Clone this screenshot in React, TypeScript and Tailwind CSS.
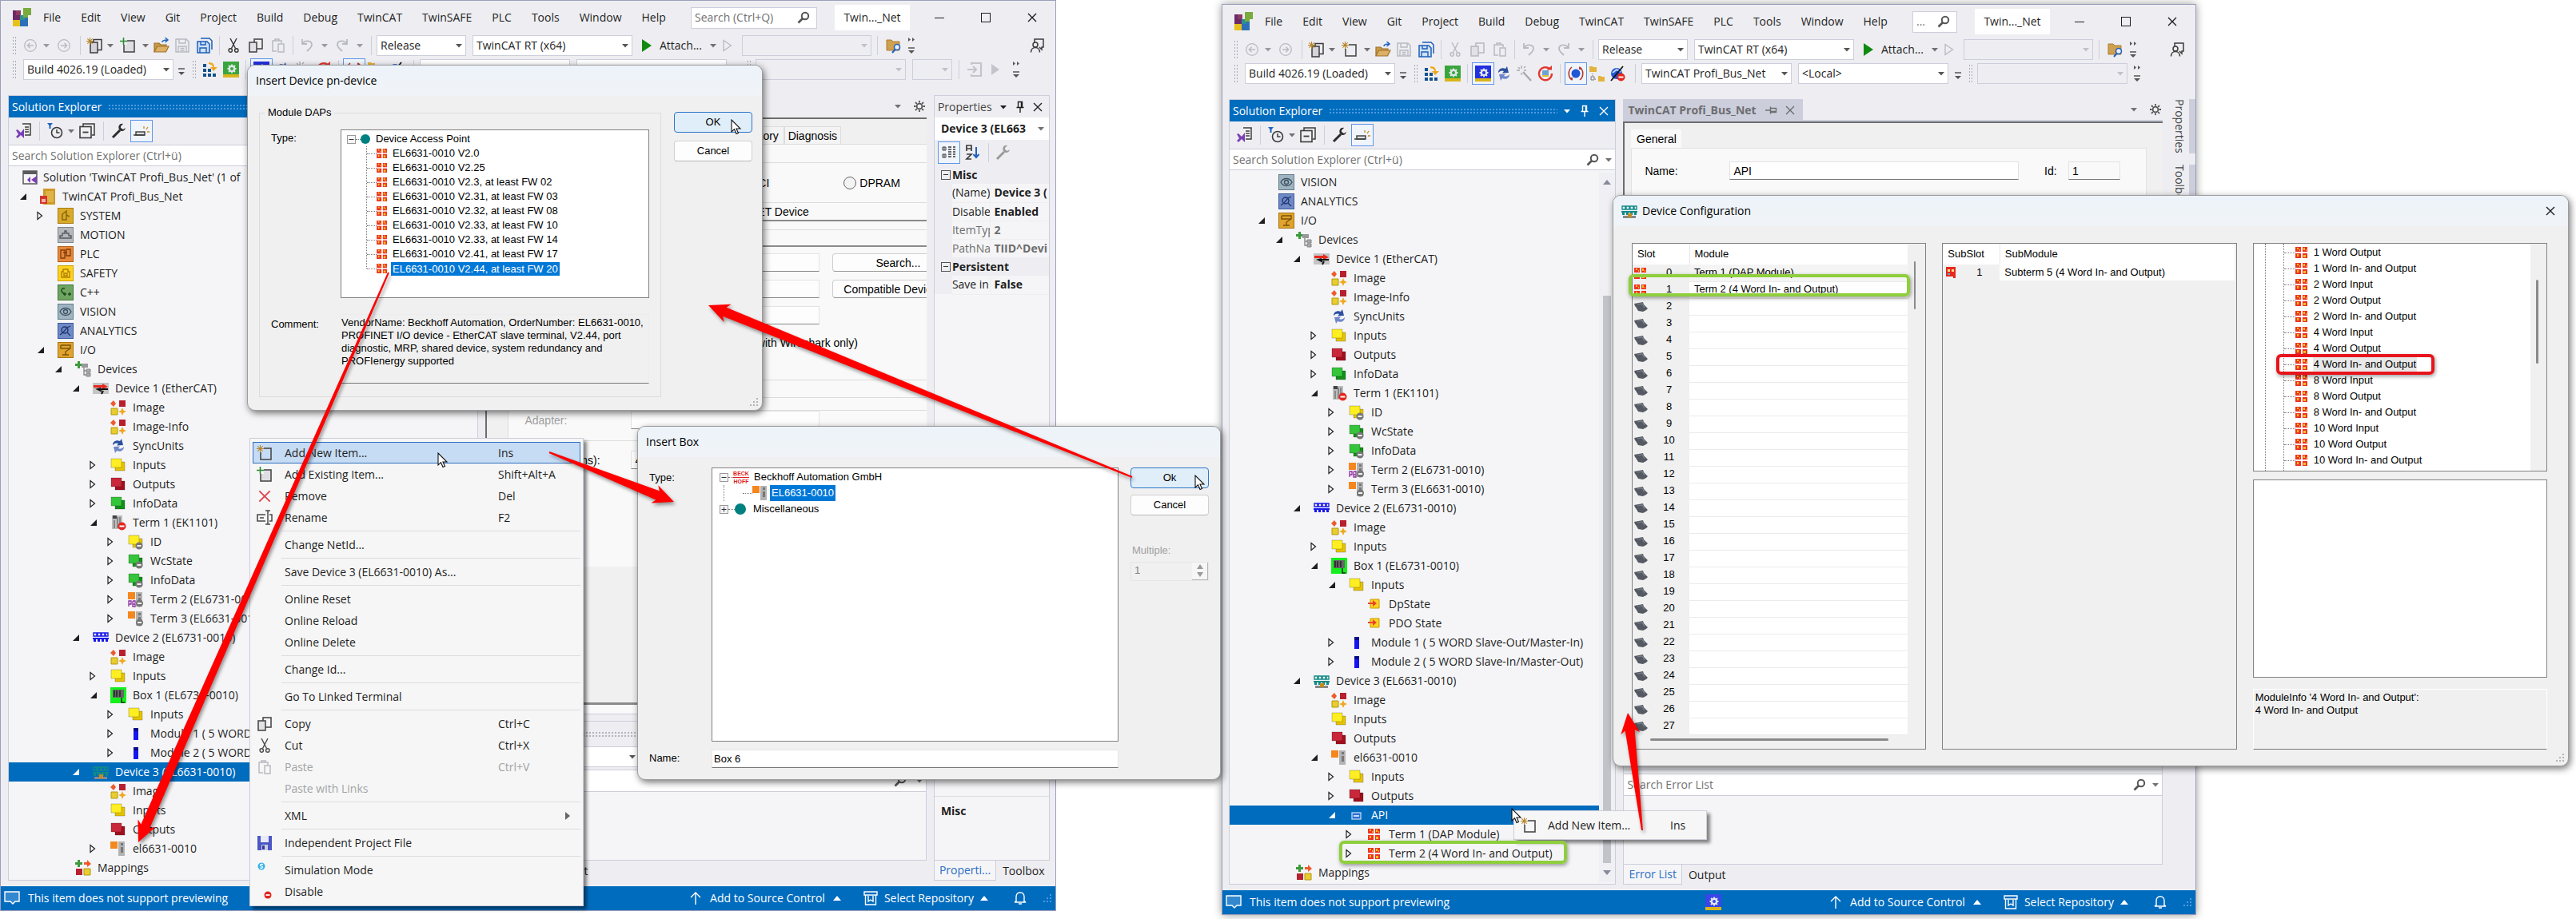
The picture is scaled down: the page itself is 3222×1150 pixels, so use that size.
import React from "react";

/* ------------------------------------------------------------------ */
/* Small glyphs                                                         */
/* ------------------------------------------------------------------ */

const Svg = ({ children, className = "h-5 w-5", box = "0 0 20 20" }: { children: React.ReactNode; className?: string; box?: string }) => (
  <svg viewBox={box} className={"shrink-0 " + className} fill="none" aria-hidden="true">
    {children}
  </svg>
);

const Down = ({ c = "#717171" }: { c?: string }) => (
  <Svg className="h-2 w-2" box="0 0 8 8">
    <path d="M0 2h8L4 6.500z" fill={c} />
  </Svg>
);
const Overflow = () => (
  <Svg className="h-4 w-2.5" box="0 0 10 16">
    <path d="M1 7h8" stroke="#555" strokeWidth="1.500" />
    <path d="M1 11h8l-4 4z" fill="#555" />
  </Svg>
);
const OverflowMore = () => (
  <Svg className="h-6 w-2.5" box="0 0 10 24">
    <path d="M1 2l3 2.500L1 7zM6 2l3 2.500L6 7z" fill="#555" />
    <path d="M1 15h8" stroke="#555" strokeWidth="1.500" />
    <path d="M1 18h8l-4 4z" fill="#555" />
  </Svg>
);
const Grip = () => (
  <div className="h-6 w-1.5 bg-[radial-gradient(#a9a9b8_1px,transparent_1px)] bg-[length:3px_4px]" />
);
const Sep = () => <div className="h-6 w-px bg-[#cccedb]" />;
const Magnifier = () => (
  <Svg className="h-4 w-4" box="0 0 16 16">
    <circle cx="10" cy="6" r="4.200" stroke="#555" strokeWidth="2" />
    <path d="M7 9l-5.500 5.500" stroke="#555" strokeWidth="2.600" />
  </Svg>
);
const Pin = ({ c = "#1e1e1e" }: { c?: string }) => (
  <Svg className="h-4 w-3" box="0 0 12 16">
    <path d="M3.500 1.500h5v7h-5zM7.500 1.500v7M1.500 8.500h9M6 8.500V15" stroke={c} strokeWidth="1.400" />
  </Svg>
);
const Cross = ({ c = "#1e1e1e", className = "h-3 w-3" }: { c?: string; className?: string }) => (
  <Svg className={className} box="0 0 12 12">
    <path d="M1 1l10 10M11 1L1 11" stroke={c} strokeWidth="1.400" />
  </Svg>
);
const Gear = () => (
  <Svg className="h-3.5 w-3.5" box="0 0 14 14">
    <circle cx="7" cy="7" r="3.400" stroke="#555" strokeWidth="1.800" />
    <path d="M7 0v2.500M7 11.500V14M0 7h2.500M11.500 7H14M2 2l1.800 1.800M10.200 10.200L12 12M12 2l-1.800 1.800M3.800 10.200L2 12" stroke="#555" strokeWidth="1.800" />
  </Svg>
);
const Cursor = ({ className }: { className: string }) => (
  <Svg className={"h-5 w-3.5 " + className} box="0 0 14 20">
    <path d="M1 1v15l3.500-3.300L7 18.500l2.500-1L7 12h5z" fill="#fff" stroke="#111" strokeWidth="1.100" />
  </Svg>
);
const SizeGrip = ({ c = "#b4b4b4" }: { c?: string }) => (
  <Svg className="h-3 w-3" box="0 0 12 12">
    <path d="M9 1h2v2H9zM5 5h2v2H5zM9 5h2v2H9zM1 9h2v2H1zM5 9h2v2H5zM9 9h2v2H9z" fill={c} />
  </Svg>
);

/* toolbar glyphs */
const Nav = ({ flip = false }) => (
  <Svg className={flip ? "h-4 w-4 rotate-180" : "h-4 w-4"} box="0 0 16 16">
    <circle cx="8" cy="8" r="7.300" stroke="#b9b9c2" strokeWidth="1.300" />
    <path d="M12 8H4.500M7.500 4.800L4.300 8l3.200 3.200" stroke="#b9b9c2" strokeWidth="1.400" />
  </Svg>
);
const Spark = () => <path d="M4.500 0v9M0 4.500h9M1.300 1.300l6.400 6.400M7.700 1.300L1.300 7.700" stroke="#b8862b" strokeWidth="1.100" />;
const NewProject = () => (
  <Svg>
    <rect x="9" y="2.500" width="10" height="13" fill="#eeeef2" stroke="#3c3c3c" strokeWidth="1.500" />
    <rect x="5" y="6" width="9" height="13" fill="#d4d4da" stroke="#3c3c3c" strokeWidth="1.500" />
    <Spark />
  </Svg>
);
const NewItem = ({ bg = "#eeeef2" }: { bg?: string }) => (
  <Svg>
    <rect x="5" y="4" width="13" height="14" fill={bg} stroke="#4a4a4a" strokeWidth="1.600" />
    <path d="M0 0h9v9H0z" fill={bg} />
    <Spark />
  </Svg>
);
const AddItem = ({ bg = "#eeeef2" }: { bg?: string }) => (
  <Svg>
    <rect x="5" y="4" width="13" height="14" fill="#dedee3" stroke="#4a4a4a" strokeWidth="1.600" />
    <path d="M0 0h9v9H0z" fill={bg} />
    <path d="M4.500 0v9M0 4.500h9" stroke="#2c8a33" strokeWidth="1.600" />
  </Svg>
);
const OpenFolder = () => (
  <Svg>
    <path d="M1 18V7h6l2 2h7v3" fill="#c79a4d" stroke="#a0722a" strokeWidth="1.200" />
    <path d="M1 18l3.500-7H19l-3.500 7z" fill="#dcb067" stroke="#a0722a" strokeWidth="1.200" />
    <path d="M11 6c0-2 2-3 6-3M14.500 0L18 3l-3.500 3" stroke="#1f62c0" strokeWidth="1.500" />
  </Svg>
);
const Floppy = ({ c }: { c: string }) => (
  <Svg className="h-[18px] w-[18px]" box="0 0 18 18">
    <path d="M1 1h13l3 3v13H1z" stroke={c} strokeWidth="1.500" />
    <path d="M5 1v5h8V1M4 17v-7h10v7M6.500 12.500h5M6.500 15h5" stroke={c} strokeWidth="1.400" />
  </Svg>
);
const FloppyAll = () => (
  <Svg>
    <path d="M5 1h11l3 3v11" stroke="#1c5fb8" strokeWidth="1.500" />
    <path d="M1 5h12l3 3v11H1z" fill="#cfe0f6" stroke="#1c5fb8" strokeWidth="1.500" />
    <path d="M5 5v4h6V5M4 19v-6h8v6" stroke="#1c5fb8" strokeWidth="1.400" />
  </Svg>
);
const Scissors = ({ c = "#333" }) => (
  <Svg className="h-[18px] w-3.5" box="0 0 14 18">
    <path d="M3 0l6.500 12.500M11 0L4.500 12.500" stroke={c} strokeWidth="1.400" />
    <circle cx="3.200" cy="15" r="2.200" stroke={c} strokeWidth="1.400" />
    <circle cx="10.800" cy="15" r="2.200" stroke={c} strokeWidth="1.400" />
  </Svg>
);
const Copy = ({ c = "#4a4a4a" }) => (
  <Svg className="h-[18px] w-[18px]" box="0 0 18 18">
    <rect x="7" y="1" width="10" height="12" stroke={c} strokeWidth="1.600" />
    <rect x="1" y="5" width="9" height="12" fill="#e2e2e6" stroke={c} strokeWidth="1.600" />
  </Svg>
);
const Paste = ({ c = "#b9b9c2" }) => (
  <Svg className="h-[18px] w-4" box="0 0 16 18">
    <path d="M6 16H1V3h11v3" stroke={c} strokeWidth="1.500" />
    <path d="M4 3V1h5v2" stroke={c} strokeWidth="1.500" />
    <rect x="8" y="7" width="7" height="10" stroke={c} strokeWidth="1.500" />
  </Svg>
);
const Undo = ({ flip = false }) => (
  <Svg className={flip ? "h-4 w-4 -scale-x-100" : "h-4 w-4"} box="0 0 16 16">
    <path d="M2 0v6h6M2 6c3-5 12-5 12 1 0 3-3 5-6 8" stroke="#b9b9c2" strokeWidth="1.800" />
  </Svg>
);
const Play = () => (
  <Svg className="h-4 w-3" box="0 0 12 16">
    <path d="M0 0l12 8L0 16z" fill="#118a11" />
  </Svg>
);
const PlayGhost = () => (
  <Svg className="h-4 w-3" box="0 0 12 16">
    <path d="M1 1.500l9.500 6.500L1 14.500z" stroke="#b9b9c2" strokeWidth="1.300" />
  </Svg>
);
const FolderSearch = () => (
  <Svg>
    <path d="M1 16V3h6l2 2h8v11z" fill="#cfa050" stroke="#ad7d30" />
    <circle cx="14" cy="12" r="3.500" fill="#eef" stroke="#1f62c0" strokeWidth="1.600" />
    <path d="M11.500 15L8 19" stroke="#1f62c0" strokeWidth="2" />
  </Svg>
);
const Feedback = () => (
  <Svg className="h-[18px] w-[18px]" box="0 0 18 18">
    <path d="M6 5V1h11v10h-2v3l-3-3" stroke="#3c3c3c" strokeWidth="1.500" />
    <circle cx="7" cy="8" r="3" stroke="#3c3c3c" strokeWidth="1.500" />
    <path d="M1.500 17.500c0-8 11-8 11 0" stroke="#3c3c3c" strokeWidth="1.500" />
  </Svg>
);
const Steps = () => (
  <Svg>
    <path d="M1 3h4v4H1zM1 9h4v4H1zM1 15h4v4H1zM7 9h4v4H7zM7 15h4v4H7zM13 15h4v4h-4z" fill="#14518c" />
    <path d="M8 1c6 0 7 3 7 6h4l-5 5-4-5h3c0-2-1-3-5-4z" fill="#f0a81e" />
  </Svg>
);
const GearTile = ({ a, b = "#d9b51c" }: { a: string; b?: string }) => (
  <Svg>
    <path d="M0 0h20v20H0z" fill={a} />
    <path d="M0 16h20v4H0z" fill={b} />
    <circle cx="11" cy="9" r="3.200" stroke="#dfe6ea" strokeWidth="2.400" />
    <path d="M11 3.500v2M11 12.500v2M5.500 9h2M14.500 9h2M7 5l1.500 1.500M13.500 11.500L15 13M15 5l-1.500 1.500M8.500 11.500L7 13" stroke="#dfe6ea" strokeWidth="1.800" />
  </Svg>
);
const Refresh = () => (
  <Svg>
    <path d="M3 9c0-5 5-7 9-5l2-3 2 8-8 .5 2-2.500C8 6 6 6 3 9z" fill="#2d4fa0" />
    <path d="M17 11c0 5-5 7-9 5l-2 3-2-8 8-.5-2 2.500c2 1 4 1 7-2z" fill="#6f86c9" />
  </Svg>
);
const Wand = () => (
  <Svg>
    <path d="M8 8l10 11" stroke="#a9a9ae" strokeWidth="2.400" />
    <path d="M6 0v4M6 9v3M0 6h4M9 3l2-2M2 2l2 2M9 6h3" stroke="#a9a9ae" strokeWidth="1.300" />
  </Svg>
);
const RedRing = () => (
  <Svg>
    <path d="M15 4a8 8 0 1 0 3 6" stroke="#e2382f" strokeWidth="2.400" />
    <path d="M11.500 5.500H18V0z" fill="#e2382f" />
    <path d="M6 6h8v8H6z" fill="#6fa3cf" />
    <path d="M6 12h8v2H6z" fill="#e0c030" />
  </Svg>
);
const BlueBall = () => (
  <Svg>
    <circle cx="10" cy="10" r="5.500" fill="#2157d6" />
    <path d="M5 2C0 6 0 14 5 18M15 2c5 4 5 12 0 16" stroke="#b33a2e" strokeWidth="1.600" />
    <path d="M2 15l4 4 0-4zM18 5l-4-4v4z" fill="#b33a2e" />
  </Svg>
);
const FolderTree = () => (
  <Svg>
    <path d="M1 1h4l1 1h4v6H1zM12 13h3l1 1h4v6h-8z" fill="#e3b33b" />
    <path d="M5 10v7h5" stroke="#777" strokeDasharray="1 1" />
    <path d="M3 14h4v4H3z" fill="#eef" stroke="#777" />
  </Svg>
);
const GlobeOff = () => (
  <Svg>
    <circle cx="9" cy="10" r="7" fill="#2157d6" />
    <path d="M4 9l5-4 5 3" stroke="#bcd0ff" strokeWidth="2" />
    <path d="M17 1L2 19" stroke="#111" strokeWidth="1.800" />
    <circle cx="14.500" cy="14.500" r="5" fill="#e3261f" />
    <path d="M11.500 14.500h6" stroke="#fff" strokeWidth="2" />
  </Svg>
);
const Logo = () => (
  <Svg className="h-6 w-6" box="0 0 24 24">
    <path d="M0 3h10v12H0z" fill="#6b2a66" />
    <path d="M4 3h6v6H4z" fill="#8c3a63" />
    <path d="M0 15h9v8H0z" fill="#e6c01b" />
    <path d="M9 11h10v12H9z" fill="#2c70b7" />
    <path d="M9 9h6v6H9z" fill="#2a8f93" />
    <path d="M13 0h10v9h-4v3h-6z" fill="#79ab3d" />
  </Svg>
);

/* ------------------------------------------------------------------ */
/* Tree icons                                                           */
/* ------------------------------------------------------------------ */

const Stack = ({ a, b, badge = false }: { a: string; b: string; badge?: boolean }) => (
  <Svg>
    <path d="M6 6h12v11H6z" fill={b} stroke="#0004" strokeWidth=".8" />
    <path d="M1 2h13v11H1z" fill={a} stroke="#0004" strokeWidth=".8" />
    {badge && (
      <>
        <circle cx="14" cy="15" r="4.500" fill="#777" />
        <path d="M11.500 15h5" stroke="#fff" strokeWidth="1.800" />
      </>
    )}
  </Svg>
);
const Tile = ({ bg, edge, children }: { bg: string; edge: string; children: React.ReactNode }) => (
  <Svg>
    <rect x=".5" y=".5" width="19" height="19" fill={bg} stroke={edge} />
    {children}
  </Svg>
);
const Quad = ({ className = "h-3.5 w-4" }: { className?: string }) => (
  <Svg className={className} box="0 0 16 14">
    <path d="M0 0h7v6H0zM9 0h6v6H9zM0 8h7v6H0zM9 8h6v6H9z" fill="#ee3322" />
    <path d="M2 1h2v2H2zM5 3h1v2H5zM10 1h2v3h-2zM13 3h1v2h-1zM2 9h2v3H2zM10 10h3v3h-3z" fill="#f4c21c" />
  </Svg>
);
const Bus = ({ c, foot = false }: { c: string; foot?: boolean }) => (
  <Svg>
    <path d="M1 4h4v4H1zM6 4h4v4H6zM11 4h4v4h-4zM16 4h3v4h-3z" stroke={c} strokeWidth="1.400" />
    <path d="M0 10h20v2H0z" fill={c} />
    <path d="M1 11h3v4H1zM6 11h3v4H6zM11 11h3v4h-3zM16 11h3v4h-3z" fill={c} />
    {foot && (
      <>
        <path d="M2 16h16v3H2z" fill="#888" />
        <path d="M8 13h5v5H8z" fill="#c48b22" />
      </>
    )}
  </Svg>
);
const Terminal = ({ pb = false, badge = false }) => (
  <Svg>
    <path d="M10 1h8v18h-8z" fill="#b3b3b3" />
    <path d="M13 3h3v3h-3zM13 8h3v7h-3z" fill="#777" />
    <path d="M0 1h9v9H0z" fill="#f5871f" />
    {pb && <path d="M1 19v-7h3v4H1M6 12v7h3v-3H6M6 12h3v3" stroke="#8a2fa0" strokeWidth="1.300" />}
    {badge && (
      <>
        <circle cx="14.500" cy="15" r="4.500" fill="#777" />
        <path d="M12 15h5" stroke="#fff" strokeWidth="1.800" />
      </>
    )}
  </Svg>
);

const treeIcons: Record<string, React.ReactNode> = {
  solution: (
    <Svg>
      <path d="M1 2h17v16H1z" fill="#f6f6f6" stroke="#5a5a5a" strokeWidth="1.500" />
      <path d="M1 2h17v4H1z" fill="#5a5a5a" />
      <path d="M6 13l4-4v8zM18 8v10l-7-5z" fill="#7a3fb5" />
    </Svg>
  ),
  project: (
    <Svg>
      <path d="M4 0h15v20H4z" fill="#cf9a23" />
      <path d="M7 3h10v14H7z" fill="#e0b24a" />
      <path d="M0 9h9v10H0z" fill="#d6342b" />
      <path d="M2 13h5v4H2z" fill="#f3b0ab" />
    </Svg>
  ),
  system: (
    <Tile bg="#d9a928" edge="#a77d14">
      <path d="M6 15V8l5-4v11zM11 9l4 2" stroke="#8a6510" strokeWidth="1.500" />
    </Tile>
  ),
  motion: (
    <Tile bg="#b5b9bd" edge="#80858a">
      <path d="M3 14h14v-3h-3V8h-3V5H9v3H6v3H3z" stroke="#55595d" strokeWidth="1.400" />
    </Tile>
  ),
  plc: (
    <Tile bg="#e8883a" edge="#b4601c">
      <path d="M4 5h5v10H4zM11 4h5v8h-5zM7 8h5" stroke="#7e3c0b" strokeWidth="1.300" />
    </Tile>
  ),
  safety: (
    <Tile bg="#fdd322" edge="#cf9f00">
      <path d="M5 15V8h2V5h6v3h2v7zM8 10h4v3H8z" stroke="#b07e00" strokeWidth="1.400" />
    </Tile>
  ),
  cpp: (
    <Tile bg="#6ea562" edge="#3f7436">
      <path d="M9 5C5 3 3 10 8 11M7 12h4M9 10v4M13 12h4M15 10v4" stroke="#1e4a18" strokeWidth="1.500" />
    </Tile>
  ),
  vision: (
    <Tile bg="#9fb4c2" edge="#647a88">
      <path d="M3 10c3-6 11-6 14 0-3 6-11 6-14 0z" stroke="#3e525f" strokeWidth="1.300" />
      <circle cx="10" cy="10" r="2.500" stroke="#3e525f" strokeWidth="1.300" />
    </Tile>
  ),
  analytics: (
    <Tile bg="#6f8ac6" edge="#3d5a9b">
      <circle cx="9" cy="9" r="4" stroke="#20366e" strokeWidth="1.400" />
      <path d="M12 12l4 4M3 15l4-3 5-6 4-2" stroke="#20366e" strokeWidth="1.300" />
    </Tile>
  ),
  io: (
    <Tile bg="#e0a42e" edge="#a87512">
      <path d="M4 4h12v4l-6 4v4M4 4v4h12M6 16h8" stroke="#7a520a" strokeWidth="1.400" />
    </Tile>
  ),
  devices: (
    <Svg>
      <path d="M3 0h3v3h3v3H6v3H3V6H0V3h3z" fill="#3d9a3d" />
      <path d="M8 3h8v5H8z" fill="#999" />
      <path d="M11 8v9h3M11 12h3" stroke="#888" strokeWidth="1.400" />
      <path d="M14 10h5v4h-5zM14 15h5v4h-5z" fill="#aaa" stroke="#888" />
    </Svg>
  ),
  ethercat: (
    <Svg>
      <path d="M0 3h20v14H0z" fill="#c4c4c4" />
      <path d="M1 6h11V4l7 4-7 3V9H1z" fill="#e8281d" />
      <path d="M19 11h-9v2l-4-2 4-1M13 13l-2 4" stroke="#111" strokeWidth="2" />
    </Svg>
  ),
  image: (
    <Svg>
      <path d="M4 1l3 4-3 4-4-4z" fill="#ee5a2c" />
      <path d="M11 1h8v8h-8z" fill="#b7202e" />
      <path d="M1 11h8v8H1z" fill="#e9cc2e" stroke="#b39a12" />
      <path d="M15 10l1.500 3.500L20 15l-3.500 1.500L15 20l-1.500-3.500L10 15l3.500-1.500z" fill="#f0a81e" />
    </Svg>
  ),
  mappings: (
    <Svg>
      <path d="M3 0h3v3h3v3H6v3H3V6H0V3h3z" fill="#3d9a3d" />
      <path d="M11 3h4V0l5 5-5 4V6h-4z" fill="#ee5a2c" />
      <path d="M1 11h8v8H1z" fill="#b7202e" />
      <path d="M11 11h8v8h-8z" fill="#e9cc2e" stroke="#b39a12" />
    </Svg>
  ),
  sync: <Refresh />,
  inputs: <Stack a="#ffee22" b="#e6c400" />,
  outputs: <Stack a="#c9283a" b="#a30f1f" />,
  info: <Stack a="#35c43a" b="#149018" />,
  inputsOff: <Stack a="#ffee22" b="#e6c400" badge />,
  infoOff: <Stack a="#35c43a" b="#149018" badge />,
  coupler: (
    <Svg>
      <path d="M2 1h13v17H2z" fill="#bdbdbd" />
      <path d="M3 1h5v4H3z" fill="#444" />
      <path d="M5 7v10M9 3v14M12 3v9" stroke="#777" strokeWidth="1.500" />
      <circle cx="14.500" cy="14.500" r="5" fill="#e3261f" />
      <path d="M11.500 14.500h6" stroke="#fff" strokeWidth="2" />
    </Svg>
  ),
  termPb: <Terminal pb badge />,
  termOff: <Terminal badge />,
  term: <Terminal />,
  busBlue: <Bus c="#1717e8" />,
  busTeal: <Bus c="#138a86" foot />,
  box: (
    <Svg>
      <path d="M0 0h20v20H0z" fill="#14f01c" />
      <path d="M3 3h14v10H3z" fill="#666" />
      <path d="M5 4v8M8 4v8M12 4v8M14 13v6h4" stroke="#222" strokeWidth="1.500" />
    </Svg>
  ),
  module: (
    <Svg>
      <path d="M7 3h6v15H7z" fill="#1515ee" />
      <path d="M7 3h6v4H7z" fill="#0a0a8c" />
    </Svg>
  ),
  pdo: (
    <Svg>
      <path d="M5 4h11v11H5z" fill="#ffd21e" stroke="#c99a00" />
      <path d="M2 8h6V5l5 4-5 4v-3H2z" fill="#e8442a" />
    </Svg>
  ),
  api: (
    <Svg>
      <rect x="4" y="7" width="11" height="8" fill="#2a6fd0" stroke="#bcd6f7" strokeWidth="1.300" />
      <path d="M6 11h7" stroke="#fff" strokeWidth="1.500" />
    </Svg>
  ),
  quad: <Quad />,
};

/* [level, expander, icon, label, selected] */
type Row = [number, "open" | "closed" | "none", string, string, boolean?];

const leftTree: Row[] = [
  [0, "open", "project", "TwinCAT Profi_Bus_Net"],
  [1, "closed", "system", "SYSTEM"],
  [1, "none", "motion", "MOTION"],
  [1, "none", "plc", "PLC"],
  [1, "none", "safety", "SAFETY"],
  [1, "none", "cpp", "C++"],
  [1, "none", "vision", "VISION"],
  [1, "none", "analytics", "ANALYTICS"],
  [1, "open", "io", "I/O"],
  [2, "open", "devices", "Devices"],
  [3, "open", "ethercat", "Device 1 (EtherCAT)"],
  [4, "none", "image", "Image"],
  [4, "none", "image", "Image-Info"],
  [4, "none", "sync", "SyncUnits"],
  [4, "closed", "inputs", "Inputs"],
  [4, "closed", "outputs", "Outputs"],
  [4, "closed", "info", "InfoData"],
  [4, "open", "coupler", "Term 1 (EK1101)"],
  [5, "closed", "inputsOff", "ID"],
  [5, "closed", "infoOff", "WcState"],
  [5, "closed", "infoOff", "InfoData"],
  [5, "closed", "termPb", "Term 2 (EL6731-0010)"],
  [5, "closed", "termOff", "Term 3 (EL6631-0010)"],
  [3, "open", "busBlue", "Device 2 (EL6731-0010)"],
  [4, "none", "image", "Image"],
  [4, "closed", "inputs", "Inputs"],
  [4, "open", "box", "Box 1 (EL6731-0010)"],
  [5, "closed", "inputs", "Inputs"],
  [5, "closed", "module", "Module 1 ( 5 WORD Slave-Out/Master-In)"],
  [5, "closed", "module", "Module 2 ( 5 WORD Slave-In/Master-Out)"],
  [3, "open", "busTeal", "Device 3 (EL6631-0010)", true],
  [4, "none", "image", "Image"],
  [4, "none", "inputs", "Inputs"],
  [4, "none", "outputs", "Outputs"],
  [4, "closed", "term", "el6631-0010"],
  [2, "none", "mappings", "Mappings"],
];

const rightTree: Row[] = [
  [1, "none", "vision", "VISION"],
  [1, "none", "analytics", "ANALYTICS"],
  [1, "open", "io", "I/O"],
  [2, "open", "devices", "Devices"],
  [3, "open", "ethercat", "Device 1 (EtherCAT)"],
  [4, "none", "image", "Image"],
  [4, "none", "image", "Image-Info"],
  [4, "none", "sync", "SyncUnits"],
  [4, "closed", "inputs", "Inputs"],
  [4, "closed", "outputs", "Outputs"],
  [4, "closed", "info", "InfoData"],
  [4, "open", "coupler", "Term 1 (EK1101)"],
  [5, "closed", "inputsOff", "ID"],
  [5, "closed", "infoOff", "WcState"],
  [5, "closed", "infoOff", "InfoData"],
  [5, "closed", "termPb", "Term 2 (EL6731-0010)"],
  [5, "closed", "termOff", "Term 3 (EL6631-0010)"],
  [3, "open", "busBlue", "Device 2 (EL6731-0010)"],
  [4, "none", "image", "Image"],
  [4, "closed", "inputs", "Inputs"],
  [4, "open", "box", "Box 1 (EL6731-0010)"],
  [5, "open", "inputs", "Inputs"],
  [6, "none", "pdo", "DpState"],
  [6, "none", "pdo", "PDO State"],
  [5, "closed", "module", "Module 1 ( 5 WORD Slave-Out/Master-In)"],
  [5, "closed", "module", "Module 2 ( 5 WORD Slave-In/Master-Out)"],
  [3, "open", "busTeal", "Device 3 (EL6631-0010)"],
  [4, "none", "image", "Image"],
  [4, "none", "inputs", "Inputs"],
  [4, "none", "outputs", "Outputs"],
  [4, "open", "term", "el6631-0010"],
  [5, "closed", "inputs", "Inputs"],
  [5, "closed", "outputs", "Outputs"],
  [5, "open", "api", "API", true],
  [6, "closed", "quad", "Term 1 (DAP Module)"],
  [6, "closed", "quad", "Term 2 (4 Word In- and Output)"],
  [2, "none", "mappings", "Mappings"],
];

const Tree = ({ rows }: { rows: Row[] }) => (
  <div role="tree" className="min-w-0 flex-1 overflow-hidden">
    {rows.map(([level, state, icon, label, selected], i) => (
      <div
        key={i}
        role="treeitem"
        aria-selected={!!selected}
        className={"flex h-6 items-center whitespace-nowrap " + (selected ? "bg-[#006cbe] text-white" : "")}
        style={{ paddingLeft: 11 + level * 22 }}
      >
        <span className="flex w-7 shrink-0 items-center pl-0.5">
          {state === "open" && (
            <Svg className="h-2.5 w-2.5" box="0 0 10 10">
              <path d="M9 1v8H1z" fill={selected ? "#fff" : "#1e1e1e"} />
            </Svg>
          )}
          {state === "closed" && (
            <Svg className="h-3 w-2" box="0 0 8 12">
              <path d="M1 1.500l5.500 4.500L1 10.500z" fill="#fff" stroke="#1e1e1e" strokeWidth="1.200" />
            </Svg>
          )}
        </span>
        <span className="mr-2 flex w-5 shrink-0 justify-center">{treeIcons[icon]}</span>
        {label}
      </div>
    ))}
  </div>
);

/* ------------------------------------------------------------------ */
/* IDE chrome                                                           */
/* ------------------------------------------------------------------ */

const Combo = ({ value, label, className, disabled = false }: { value: string; label: string; className: string; disabled?: boolean }) => (
  <div className={"relative flex h-[26px] shrink-0 items-center border border-[#cccedb] " + (disabled ? "bg-[#eeeef2] " : "bg-white ") + className}>
    <select aria-label={label} disabled={disabled} className="h-full w-full appearance-none truncate bg-transparent pl-1 pr-5 outline-none">
      <option>{value}</option>
    </select>
    <span className="pointer-events-none absolute right-1">
      <Down c={disabled ? "#c0c0c8" : "#555"} />
    </span>
  </div>
);

const Cell = ({ w, children }: { w: string; children: React.ReactNode }) => (
  <span className={"flex h-7 shrink-0 items-center justify-center " + w}>{children}</span>
);
const Tool = ({ w, name, children, boxed = false }: { w: string; name: string; children: React.ReactNode; boxed?: boolean }) => (
  <button
    type="button"
    aria-label={name}
    className={"flex h-7 shrink-0 items-center justify-center " + (boxed ? "border border-[#5e95e8] bg-[#f0f4fb] " : "") + w}
  >
    {children}
  </button>
);

const menus = ["File", "Edit", "View", "Git", "Project", "Build", "Debug", "TwinCAT", "TwinSAFE", "PLC", "Tools", "Window", "Help"];

const MenuBar = ({ wide }: { wide: boolean }) => (
  <div className="flex h-[42px] items-center overflow-hidden whitespace-nowrap pl-[15px]">
    <Logo />
    <nav className="ml-3.5 flex gap-[25px]">
      {menus.map((m) => (
        <button key={m} type="button">
          {m}
        </button>
      ))}
    </nav>
    <label className={"ml-auto flex h-[27px] shrink-0 items-center border border-[#cccedb] bg-white pr-2 " + (wide ? "w-[158px]" : "w-14")}>
      <input aria-label="Search" placeholder={wide ? "Search (Ctrl+Q)" : "..."} className="w-full min-w-0 flex-1 bg-transparent pl-1 outline-none placeholder:text-[#717171]" />
      <Magnifier />
    </label>
    <button type="button" className="ml-[22px] mr-2 h-8 w-[94px] shrink-0 bg-white">
      Twin..._Net
    </button>
    <button type="button" aria-label="Minimize" className="flex w-[58px] shrink-0 justify-center">
      <span className="h-px w-3 bg-[#1e1e1e]" />
    </button>
    <button type="button" aria-label="Maximize" className="flex w-[58px] shrink-0 justify-center">
      <span className="h-3 w-3 border border-[#1e1e1e]" />
    </button>
    <button type="button" aria-label="Close" className="flex w-[58px] shrink-0 justify-center">
      <Cross />
    </button>
  </div>
);

const StandardBar = ({ first }: { first: boolean }) => (
  <div className="flex h-7 items-center overflow-hidden whitespace-nowrap pl-[9px]">
    <Cell w="w-4"><Grip /></Cell>
    <Tool w="w-6" name="Back"><Nav /></Tool>
    <Cell w="w-4"><Down c="#9a9aa4" /></Cell>
    <Tool w="w-7" name="Forward"><Nav flip /></Tool>
    <Cell w="w-3"><Sep /></Cell>
    <Tool w="w-6" name="New project"><NewProject /></Tool>
    <Cell w="w-4"><Down /></Cell>
    <Tool w="w-7" name="New item">{first ? <AddItem /> : <NewItem />}</Tool>
    <Cell w="w-4"><Down /></Cell>
    <Tool w="w-6" name="Open"><OpenFolder /></Tool>
    <Tool w="w-7" name="Save"><Floppy c="#b9b9c2" /></Tool>
    <Tool w="w-7" name="Save all"><FloppyAll /></Tool>
    <Cell w="w-2"><Sep /></Cell>
    <Tool w="w-7" name="Cut"><Scissors c={first ? "#333" : "#b9b9c2"} /></Tool>
    <Tool w="w-7" name="Copy"><Copy c={first ? "#4a4a4a" : "#b9b9c2"} /></Tool>
    <Tool w="w-7" name="Paste"><Paste /></Tool>
    <Cell w="w-2"><Sep /></Cell>
    <Tool w="w-7" name="Undo"><Undo /></Tool>
    <Cell w="w-4"><Down c="#9a9aa4" /></Cell>
    <Tool w="w-7" name="Redo"><Undo flip /></Tool>
    <Cell w="w-4"><Down c="#9a9aa4" /></Cell>
    <Cell w="w-3"><Sep /></Cell>
    <Combo label="Configuration" value="Release" className="ml-px w-28" />
    <Combo label="Platform" value="TwinCAT RT (x64)" className="ml-2 w-[200px]" />
    <button type="button" className="ml-3 flex items-center gap-2.5">
      <Play />
      Attach...
      <Down />
    </button>
    <Tool w="w-7" name="Start without debugging"><PlayGhost /></Tool>
    <Combo label="Process" value="" disabled className="ml-1 w-[162px]" />
    <Cell w="w-4"><Sep /></Cell>
    <Tool w="w-6" name="Find in files"><FolderSearch /></Tool>
    <Cell w="w-5"><OverflowMore /></Cell>
    <button type="button" aria-label="Send feedback" className="ml-auto mr-3.5">
      <Feedback />
    </button>
  </div>
);

const TwinCatBar = ({ first }: { first: boolean }) => (
  <div className="flex h-8 items-center overflow-hidden whitespace-nowrap pl-[9px]">
    <Cell w="w-4"><Grip /></Cell>
    <Combo label="Build" value="Build 4026.19 (Loaded)" className="ml-[3px] w-[188px]" />
    <Cell w="w-5"><Overflow /></Cell>
    <Cell w="w-3"><Grip /></Cell>
    <Tool w="w-7" name="Activate configuration"><Steps /></Tool>
    <Tool w="w-6" name="Run mode"><GearTile a="#3aa53c" /></Tool>
    <Cell w="w-3"><Sep /></Cell>
    <Tool w="w-7" name="Config mode" boxed><GearTile a="#2230e0" /></Tool>
    <Tool w="w-6" name="Reload devices"><Refresh /></Tool>
    <Tool w="w-7" name="Scan"><Wand /></Tool>
    <Tool w="w-6" name="Toggle free run"><RedRing /></Tool>
    <Cell w="w-3"><Sep /></Cell>
    <Tool w="w-7" name="Show online data" boxed><BlueBall /></Tool>
    <Tool w="w-6" name="Show sub items"><FolderTree /></Tool>
    <Tool w="w-7" name="Security"><GlobeOff /></Tool>
    <Cell w="w-4"><Sep /></Cell>
    <Combo label="Project" value="TwinCAT Profi_Bus_Net" className="w-[188px]" />
    <Combo label="Target" value="<Local>" className="ml-2 w-[188px]" />
    <Cell w="w-6"><Overflow /></Cell>
    <Cell w="w-2"><Grip /></Cell>
    <Combo label="PLC instance" value="" disabled className="ml-1 w-[188px]" />
    {first && (
      <>
        <Combo label="Port" value="" disabled className="ml-2 w-[50px]" />
        <Cell w="w-4"><Sep /></Cell>
        <Tool w="w-6" name="Login">
          <Svg>
            <path d="M6 4V2h12v16H6v-2M1 10h10M8 6l4 4-4 4" stroke="#c4c4cc" strokeWidth="2.200" />
          </Svg>
        </Tool>
        <Tool w="w-7" name="Start PLC">
          <Svg className="h-3.5 w-2.5" box="0 0 10 14"><path d="M0 0l10 7-10 7z" fill="#c4c4cc" /></Svg>
        </Tool>
      </>
    )}
    <Cell w="w-6"><OverflowMore /></Cell>
  </div>
);

const Explorer = ({ children }: { children: React.ReactNode }) => (
  <section className="flex min-w-0 flex-col border border-[#cccedb] bg-[#f5f5f7]">
    <header className="flex h-[27px] items-center bg-[#006cbe] pl-1 pr-2 text-white">
      Solution Explorer
      <span className="mx-2 h-2 flex-1 bg-[radial-gradient(#4d9be0_1px,transparent_1px)] bg-[length:4px_4px]" />
      <span className="flex items-center gap-3">
        <Down c="#fff" />
        <Pin c="#fff" />
        <Cross c="#fff" />
      </span>
    </header>
    <div className="flex h-[34px] items-center bg-[#eeeef2] pl-1">
      <Tool w="w-7" name="Switch views">
        <Svg>
          <path d="M9 1h10v14h-7" fill="#f4f4f4" stroke="#3c3c3c" strokeWidth="1.500" />
          <path d="M12 5h5M12 8h5M12 11h5" stroke="#3c3c3c" strokeWidth="1.300" />
          <path d="M1 9l2-1 4 4 4-5v12l-4-4-4 4-2-2 3-3z" fill="#7a3fb5" />
        </Svg>
      </Tool>
      <Cell w="w-3"><Sep /></Cell>
      <Tool w="w-7" name="Pending changes">
        <Svg>
          <path d="M0 0h7L4.500 3v4h-2V3z" fill="#1f62c0" />
          <circle cx="12" cy="12" r="6.500" stroke="#3c3c3c" strokeWidth="1.600" />
          <path d="M12 8v4h3.500" stroke="#3c3c3c" strokeWidth="1.500" />
        </Svg>
      </Tool>
      <Cell w="w-3"><Down /></Cell>
      <Tool w="w-7" name="Collapse all">
        <Svg>
          <path d="M5 4V1h14v14h-3" stroke="#3c3c3c" strokeWidth="1.500" />
          <rect x="1" y="4.500" width="14" height="14" stroke="#3c3c3c" strokeWidth="1.600" />
          <path d="M4.500 11.500h7" stroke="#3c3c3c" strokeWidth="1.800" />
        </Svg>
      </Tool>
      <Cell w="w-3"><Sep /></Cell>
      <Tool w="w-7" name="Properties">
        <Svg>
          <path d="M2 18l9-9" stroke="#2c2c2c" strokeWidth="3" />
          <path d="M15 1c-4-1-7 3-5 7 2 3 7 3 8-2l-3 2-3-2 0-2z" fill="#2c2c2c" />
        </Svg>
      </Tool>
      <Tool w="w-7" name="Preview selected items" boxed>
        <Svg>
          <rect x="3" y="11" width="11" height="4" fill="#ddd" stroke="#3c3c3c" strokeWidth="1.400" />
          <path d="M0 15h14" stroke="#3c3c3c" strokeWidth="1.500" />
          <path d="M13 7V4M16 8l2-3M17 11h3" stroke="#c68a1d" strokeWidth="1.300" />
        </Svg>
      </Tool>
    </div>
    <label className="flex h-[27px] items-center border-y border-[#cccedb] bg-white pr-1">
      <input aria-label="Search Solution Explorer" placeholder="Search Solution Explorer (Ctrl+ü)" className="min-w-0 flex-1 bg-transparent pl-1 outline-none placeholder:text-[#717171]" />
      <Magnifier />
      <span className="ml-2"><Down /></span>
    </label>
    {children}
  </section>
);

const StatusBar = ({ badge = false }) => (
  <footer className="flex h-[30px] items-center bg-[#006cbe] px-1 text-white">
    <Svg className="h-[18px] w-5" box="0 0 20 18">
      <path d="M1 1h18v12h-5l-3 3-3-3H1z" stroke="#fff" strokeWidth="1.400" fill="#3388cf" />
    </Svg>
    <span className="ml-2.5 flex-1">This item does not support previewing</span>
    {badge && <span className="mr-[135px]"><GearTile a="#3a45e8" /></span>}
    <button type="button" className="flex items-center gap-2.5">
      <Svg className="h-4 w-4" box="0 0 16 16"><path d="M8 16V1M2 7l6-6 6 6" stroke="#fff" strokeWidth="1.400" /></Svg>
      Add to Source Control
      <Svg className="h-2 w-2.5" box="0 0 10 8"><path d="M0 7h10L5 1z" fill="#fff" /></Svg>
    </button>
    <button type="button" className="ml-7 flex items-center gap-2">
      <Svg className="h-[18px] w-[18px]" box="0 0 18 18">
        <path d="M1 1h16v4H1zM2.500 5v12h13V5M6 6v7l3-2 3 2V6" stroke="#fff" strokeWidth="1.400" />
      </Svg>
      Select Repository
      <Svg className="h-2 w-2.5" box="0 0 10 8"><path d="M0 7h10L5 1z" fill="#fff" /></Svg>
    </button>
    <button type="button" aria-label="Notifications" className="ml-8 mr-5">
      <Svg className="h-[18px] w-4" box="0 0 16 18">
        <path d="M3 13V7c0-7 10-7 10 0v6l2 1H1zM6 16h4" stroke="#fff" strokeWidth="1.400" />
      </Svg>
    </button>
    <SizeGrip c="#4d9be0" />
  </footer>
);

/* ------------------------------------------------------------------ */
/* Left IDE window                                                      */
/* ------------------------------------------------------------------ */

const Field = ({ label, value = "" }: { label: string; value?: string }) => (
  <label className="flex h-[23px] items-center">
    <span className="w-[133px] shrink-0">{label}</span>
    <input defaultValue={value} className="h-full w-[236px] border border-b-[#888] border-[#e3e3e3] bg-[#fdfdfd] px-1 outline-none" />
  </label>
);

const AdapterPage = () => (
  <div className="flex flex-col overflow-hidden whitespace-nowrap border-l-2 border-t-2 border-[#6d6d70] bg-[#f0f0f0] font-['Liberation_Sans',sans-serif] text-sm text-black">
    <div className="flex h-[31px] items-end pl-7">
      {["General", "Adapter", "Protocol"].map((t) => (
        <button key={t} type="button" className="h-[22px] border border-b-0 border-[#dcdcdc] bg-[#f3f3f3] px-2">{t}</button>
      ))}
      <button type="button" className="ml-auto h-[22px] w-[83px] border border-b-0 border-[#dcdcdc] bg-[#f3f3f3] pr-1.5 text-right">Directory</button>
      <button type="button" className="mr-[107px] h-[22px] w-[71px] border border-b-0 border-[#dcdcdc] bg-[#f3f3f3]">Diagnosis</button>
    </div>
    <div className="ml-[26px] flex flex-col border-l border-t border-[#dcdcdc] bg-[#f9f9f9]">
      <div className="h-[23px] border-b border-[#dcdcdc]" />
      <div className="flex h-[50px] items-center justify-end border-b border-[#dcdcdc] pr-[33px]">
        <label className="flex items-center gap-1"><input type="radio" name="adapter" className="h-4 w-4" />PCI</label>
        <label className="ml-[93px] flex items-center gap-1"><input type="radio" name="adapter" className="h-4 w-4 appearance-none rounded-full border border-[#666] bg-[#f3f3f3]" />DPRAM</label>
      </div>
      <div className="h-[23px] border-b-2 border-[#8a8a8a] pl-[258px] leading-[22px]">PROFINET Device</div>
      <div className="mt-2.5 h-[22px] border-b-2 border-t border-b-[#8a8a8a] border-t-[#dcdcdc]" />
      <div className="mt-2 flex gap-4 pl-5">
        <div className="flex flex-col gap-2.5">
          <Field label="PCI Bus/Slot:" />
          <Field label="MAC Address:" />
          <Field label="IP Address:" />
        </div>
        <div className="flex flex-col gap-2.5">
          <button type="button" className="h-[23px] w-[164px] rounded border border-[#cfcfcf] border-b-[#999] bg-[#fdfdfd]">Search...</button>
          <button type="button" className="h-[23px] w-[164px] rounded border border-[#cfcfcf] border-b-[#999] bg-[#fdfdfd]">Compatible Devices...</button>
        </div>
      </div>
      <div className="flex h-[70px] items-start justify-end border-b border-[#dcdcdc] pr-[86px] pt-[13px]">
        <label className="flex items-center gap-2"><input type="checkbox" />Promiscuous Mode (use with Wireshark only)</label>
      </div>
      <div className="h-[22px] border-b border-[#dcdcdc]" />
      <div className="h-4 border-b border-[#dcdcdc]" />
      <div className="h-[38px] border-b border-[#dcdcdc] pl-5 text-[#a0a0a0]"><Field label="Adapter:" /></div>
      <div className="h-[157px] pl-5 pt-3"><Field label="Free Run (ms):" value="4" /></div>
    </div>
    <div className="h-[170px]" />
    <div className="h-[3px] bg-[#8a8a8a]" />
    <div className="h-3 border-b border-[#cccedb] bg-[#f9f9f9]" />
  </div>
);

const Minus = () => (
  <span className="flex h-3 w-3 shrink-0 items-center justify-center border border-[#555]">
    <span className="h-px w-1.5 bg-[#333]" />
  </span>
);

const PropRow = ({ name, value, dim = false }: { name: string; value: string; dim?: boolean }) => (
  <tr className={"h-[23px] " + (dim ? "text-[#6d6d6d]" : "")}>
    <td className="bg-[#eeeef2]" />
    <td className="overflow-hidden border-b border-r border-[#eeeef2]">{name}</td>
    <td className="overflow-hidden border-b border-[#eeeef2] pl-1 font-bold">{value}</td>
  </tr>
);
const PropHead = ({ name }: { name: string }) => (
  <tr className="h-[23px] bg-[#eeeef2]">
    <td className="pl-2"><Minus /></td>
    <td colSpan={2} className="font-bold">{name}</td>
  </tr>
);

const LeftWindow = () => (
  <main className="flex min-w-0 flex-col border border-[#9b9fb9] bg-[#eeeef2]">
    <MenuBar wide />
    <StandardBar first />
    <TwinCatBar first />
    <div className="grid flex-1 grid-cols-[minmax(0,588fr)_minmax(0,551fr)_minmax(0,145fr)] gap-[9px] pb-[7px] pl-[9px] pr-[7px] pt-4">
      <Explorer>
        <div className="flex flex-1 flex-col pb-[3px] pt-0.5">
          <div className="flex h-6 items-center whitespace-nowrap pl-[17px]">
            {treeIcons.solution}
            <span className="ml-1.5">Solution 'TwinCAT Profi_Bus_Net' (1 of</span>
          </div>
          <Tree rows={leftTree} />
        </div>
      </Explorer>
      <section className="flex min-w-0 flex-col">
        <div className="flex h-7 items-center justify-end gap-4 pr-0.5">
          <Down />
          <Gear />
        </div>
        <AdapterPage />
        <div className="mt-2 flex flex-1 flex-col border border-[#cccedb] bg-[#f5f5f7]">
          <div className="flex h-[31px] items-center bg-[#eeeef2] pl-1">
            Error List
            <span className="mx-2 h-2 flex-1 bg-[radial-gradient(#b4b4c0_1px,transparent_1px)] bg-[length:4px_4px]" />
          </div>
          <div className="flex h-[29px] bg-[#eeeef2]">
            <Combo label="Error scope" value="Entire Solution" className="w-[192px]" />
          </div>
          <label className="flex h-7 items-center border-y border-[#cccedb] bg-white pr-1">
            <input aria-label="Search Error List" placeholder="Search Error List" className="min-w-0 flex-1 bg-transparent pl-1 outline-none" />
            <Magnifier />
            <span className="ml-3"><Down /></span>
          </label>
        </div>
        <div className="flex h-[25px] items-center">
          <button type="button" className="h-full border border-t-0 border-[#cccedb] bg-[#f5f5f7] px-1.5 text-[#2b6fc4]">Error List</button>
          <button type="button" className="px-2">Output</button>
        </div>
      </section>
      <section className="flex min-w-0 flex-col overflow-hidden whitespace-nowrap">
        <div className="flex min-h-0 flex-1 flex-col border border-[#cccedb] bg-[#f5f5f7]">
          <header className="flex h-[27px] items-center justify-between bg-[#eeeef2] pl-1 pr-2">
            <span className="text-[#444]">Properties</span>
            <Down c="#1e1e1e" />
            <Pin />
            <Cross />
          </header>
          <div className="flex h-7 items-center justify-between bg-white pl-2 pr-1.5 font-bold">
            Device 3 (EL663
            <Down />
          </div>
          <div className="flex h-8 items-center bg-[#eeeef2] pl-1">
            <Tool w="w-7" name="Categorized" boxed>
              <Svg>
                <path d="M2 3h4v4H2zM2 12h4v4H2zM4 3v4M4 12v4" stroke="#3c3c3c" />
                <path d="M9 3h4M9 6h4M9 9h4M9 12h4M9 15h4M15 3h3M15 6h3M15 9h3M15 12h3M15 15h3" stroke="#3c3c3c" strokeWidth="1.400" />
              </Svg>
            </Tool>
            <Tool w="w-8" name="Alphabetical">
              <Svg>
                <path d="M2 8V1h6v7M2 5h6M2 12h6l-6 6h6" stroke="#3c3c3c" strokeWidth="1.700" />
                <path d="M14 3v13M10.500 12l3.500 4 3.500-4" stroke="#1f62c0" strokeWidth="2" />
              </Svg>
            </Tool>
            <Cell w="w-2"><Sep /></Cell>
            <Tool w="w-7" name="Property pages">
              <Svg>
                <path d="M2 18l9-9" stroke="#9a9a9a" strokeWidth="3" />
                <path d="M15 1c-4-1-7 3-5 7 2 3 7 3 8-2l-3 2-3-2 0-2z" fill="#9a9a9a" />
              </Svg>
            </Tool>
          </div>
          <table className="w-full table-fixed border-collapse">
            <colgroup>
              <col className="w-[22px]" />
              <col className="w-12" />
              <col />
            </colgroup>
            <tbody>
              <PropHead name="Misc" />
              <PropRow name="(Name)" value="Device 3 (" />
              <PropRow name="Disabled" value="Enabled" />
              <PropRow name="ItemType" value="2" dim />
              <PropRow name="PathName" value="TIID^Devi" dim />
              <PropHead name="Persistent" />
              <PropRow name="Save in" value="False" />
            </tbody>
          </table>
          <div className="mt-auto h-20 border-t border-[#dcdce4] px-2 pt-2 font-bold">Misc</div>
        </div>
        <div className="flex h-[25px] items-center">
          <button type="button" className="h-full border border-t-0 border-[#cccedb] bg-[#f5f5f7] px-1.5 text-[#2b6fc4]">Properti...</button>
          <button type="button" className="px-2">Toolbox</button>
        </div>
      </section>
    </div>
    <StatusBar />
  </main>
);

/* ------------------------------------------------------------------ */
/* Right IDE window                                                     */
/* ------------------------------------------------------------------ */

const RightWindow = () => (
  <main className="mt-[5px] flex min-w-0 flex-col border border-[#9b9fb9] bg-[#eeeef2] shadow-[0_0_10px_#0006]">
    <MenuBar wide={false} />
    <StandardBar first={false} />
    <TwinCatBar first={false} />
    <div className="grid flex-1 grid-cols-[minmax(0,484fr)_minmax(0,674fr)_32px] gap-[9px] pb-[7px] pl-2 pt-4">
      <Explorer>
        <div className="flex flex-1 pb-0.5 pt-[3px]">
          <Tree rows={rightTree} />
          <div className="flex w-5 flex-col items-center gap-2 bg-[#f0f0f4] py-2">
            <Svg className="h-2 w-2.5" box="0 0 10 8"><path d="M0 7h10L5 1z" fill="#868999" /></Svg>
            <div className="mt-[130px] w-2.5 flex-1 bg-[#c2c3c9]" />
            <Svg className="h-2 w-2.5" box="0 0 10 8"><path d="M0 1h10L5 7z" fill="#868999" /></Svg>
          </div>
        </div>
      </Explorer>
      <section className="flex min-w-0 flex-col">
        <div className="flex h-7 items-start border-b-2 border-[#cccedb]">
          <div className="flex h-7 w-[225px] items-center gap-3 bg-[#cccedb] pl-1.5 font-bold text-[#6d6d70]">
            TwinCAT Profi_Bus_Net
            <span className="rotate-90"><Pin c="#6d6d70" /></span>
            <Cross c="#6d6d70" />
          </div>
          <span className="ml-auto flex h-full items-center gap-4 pr-0.5">
            <Down />
            <Gear />
          </span>
        </div>
        <div className="flex-1 border-l-2 border-t-2 border-[#6d6d70] bg-[#f0f0f0] pl-2 pr-5 pt-2 font-['Liberation_Sans',sans-serif] text-sm text-black">
          <button type="button" className="h-[23px] w-[63px] bg-[#f9f9f9]">General</button>
          <div className="flex h-[260px] items-start border border-[#e3e3e3] bg-[#f9f9f9] pl-4 pt-4">
            <label className="flex h-[23px] flex-1 items-center">
              <span className="w-[106px] shrink-0">Name:</span>
              <input defaultValue="API" className="h-full min-w-0 flex-1 border border-[#e3e3e3] border-b-[#777] bg-white px-1 outline-none" />
            </label>
            <label className="ml-8 mr-8 flex h-[23px] items-center">
              <span className="w-[30px]">Id:</span>
              <input defaultValue="1" className="h-full w-[65px] border border-[#e3e3e3] border-b-[#777] bg-[#f9f9f9] px-1 outline-none" />
            </label>
          </div>
        </div>
        <div className="flex flex-col border-x border-[#cccedb]">
          <div className="mt-[10px] h-px bg-[#cccedb]" />
          <label className="mt-1 flex h-7 items-center border-y border-[#cccedb] bg-white pr-1">
            <input aria-label="Search Error List" placeholder="Search Error List" className="min-w-0 flex-1 bg-transparent pl-1 outline-none placeholder:text-[#717171]" />
            <Magnifier />
            <span className="ml-2"><Down /></span>
          </label>
          <div className="h-[86px] border-b border-[#cccedb] bg-[#f5f5f7]" />
        </div>
        <div className="flex h-[25px] items-center">
          <button type="button" className="h-full border border-t-0 border-[#cccedb] bg-[#f5f5f7] px-1.5 text-[#2b6fc4]">Error List</button>
          <button type="button" className="px-2">Output</button>
        </div>
      </section>
      <aside className="flex flex-col gap-3.5">
        {["Properties", "Toolbox"].map((t) => (
          <button key={t} type="button" className="flex h-[68px] w-full items-center justify-start border-r-8 border-[#cccedb] text-[#444] [writing-mode:vertical-rl]">
            {t}
          </button>
        ))}
      </aside>
    </div>
    <StatusBar badge />
  </main>
);

/* ------------------------------------------------------------------ */
/* Dialogs                                                              */
/* ------------------------------------------------------------------ */

const Dialog = ({ title, className, icon, closable = false, children }: { title: string; className: string; icon?: React.ReactNode; closable?: boolean; children: React.ReactNode }) => (
  <section
    role="dialog"
    aria-label={title}
    className={"absolute flex flex-col overflow-hidden rounded-[10px] border border-[#9c9c9c] bg-[#f0f0f0] font-['Liberation_Sans',sans-serif] text-[13px] text-black shadow-[2px_3px_9px_#0008] " + className}
  >
    <header className="flex h-[38px] shrink-0 items-center gap-1.5 bg-linear-to-b from-[#edf3fa] to-[#f0f4f7] px-2.5 font-['Open_Sans',sans-serif] text-sm">
      {icon}
      <h2 className="flex-1">{title}</h2>
      {closable && (
        <button type="button" aria-label="Close" className="pr-1.5"><Cross /></button>
      )}
    </header>
    {children}
  </section>
);

const Push = ({ children, hot = false, cursor = "" }: { children: React.ReactNode; hot?: boolean; cursor?: string }) => (
  <button
    type="button"
    className={"relative h-[26px] w-[98px] shrink-0 rounded border " + (hot ? "border-[#2f76c9] bg-[#e0eef9]" : "border-[#d0d0d0] border-b-[#b8b8b8] bg-[#fdfdfd]")}
  >
    {children}
    {hot && <Cursor className={"absolute top-2 " + cursor} />}
  </button>
);

const ExpandBox = ({ plus = false }) => (
  <Svg className="h-[11px] w-[11px]" box="0 0 11 11">
    <rect x=".5" y=".5" width="10" height="10" fill="#f4f4f4" stroke="#999" />
    <path d={plus ? "M2.500 5.500h6M5.500 2.500v6" : "M2.500 5.500h6"} stroke="#334" />
  </Svg>
);
const Ball = ({ className = "h-3.5 w-3.5" }: { className?: string }) => <span className={"shrink-0 rounded-full bg-[#008080] " + className} />;
const Dots = ({ w }: { w: string }) => <span className={"h-0 shrink-0 border-t border-dotted border-[#777] " + w} />;

const versions = [
  "EL6631-0010 V2.0",
  "EL6631-0010 V2.25",
  "EL6631-0010 V2.3, at least FW 02",
  "EL6631-0010 V2.31, at least FW 03",
  "EL6631-0010 V2.32, at least FW 08",
  "EL6631-0010 V2.33, at least FW 10",
  "EL6631-0010 V2.33, at least FW 14",
  "EL6631-0010 V2.41, at least FW 17",
  "EL6631-0010 V2.44, at least FW 20",
];

const InsertDevice = () => (
  <Dialog title="Insert Device pn-device" className="left-[309px] top-[81px] h-[433px] w-[645px]">
    <div className="flex flex-1 gap-4 pb-4 pl-3.5 pr-3 pt-3">
      <fieldset className="flex-1 border border-[#dcdcdc] px-[14px]">
        <legend className="-ml-2 px-1 leading-[18px]">Module DAPs</legend>
        <div className="flex pt-3">
          <span className="w-[87px] shrink-0 pt-0.5">Type:</span>
          <div className="h-[211px] min-w-0 flex-1 border border-[#828282] bg-white pl-[7px] pt-0.5">
            <div className="flex h-[18px] items-center">
              <ExpandBox />
              <Dots w="w-1.5" />
              <Ball className="h-3 w-3" />
              <span className="ml-[7px]">Device Access Point</span>
            </div>
            <ul className="ml-6 h-[153px] border-l border-dotted border-[#777]">
              {versions.map((v, i) => (
                <li key={i} className="flex h-[18px] items-center whitespace-nowrap">
                  <Dots w="w-3" />
                  <Quad className="h-3 w-3.5" />
                  <span className={i === 8 ? "ml-1 bg-[#0078d7] px-0.5 leading-[17px] text-white" : "ml-1 px-0.5"}>{v}</span>
                </li>
              ))}
            </ul>
          </div>
        </div>
        <div className="flex pt-5">
          <span className="w-[87px] shrink-0 pt-1">Comment:</span>
          <p className="h-[87px] min-w-0 flex-1 border border-[#ececec] border-b-[#777] pt-0.5 leading-4">
            VendorName: Beckhoff Automation, OrderNumber: EL6631-0010, PROFINET I/O device - EtherCAT slave terminal, V2.44, port diagnostic, MRP, shared device, system redundancy and PROFIenergy supported
          </p>
        </div>
      </fieldset>
      <div className="flex flex-col gap-2.5 pt-2">
        <Push hot cursor="left-[70px]">OK</Push>
        <Push>Cancel</Push>
      </div>
    </div>
    <div className="absolute bottom-1 right-1"><SizeGrip /></div>
  </Dialog>
);

const InsertBox = () => (
  <Dialog title="Insert Box" className="left-[797px] top-[533px] h-[443px] w-[730px]">
    <div className="flex flex-1 gap-[15px] pb-3.5 pl-[14px] pr-3.5 pt-[13px]">
      <div className="flex flex-1 flex-col gap-2.5">
        <div className="flex flex-1">
          <span className="w-[78px] shrink-0 pt-1">Type:</span>
          <div className="flex-1 border border-[#828282] bg-white pl-[9px] pt-px">
            <div className="flex h-5 items-center">
              <ExpandBox />
              <Dots w="w-1.5" />
              <span className="w-5 shrink-0 text-center text-[7px] font-bold leading-[9px] text-[#e02020]">
                <span className="block border-b border-[#e02020]">BECK</span>
                <span className="block">HOFF</span>
              </span>
              <span className="ml-1.5">Beckhoff Automation GmbH</span>
            </div>
            <div className="ml-[5px] flex h-5 items-center border-l border-dotted border-[#777] pl-[23px]">
              <Dots w="w-3" />
              <Terminal />
              <span className="ml-0.5 bg-[#0078d7] px-0.5 leading-5 text-white">EL6631-0010</span>
            </div>
            <div className="flex h-5 items-center">
              <ExpandBox plus />
              <Dots w="w-2" />
              <Ball />
              <span className="ml-[9px]">Miscellaneous</span>
            </div>
          </div>
        </div>
        <label className="flex h-[23px] items-center">
          <span className="w-[78px] shrink-0">Name:</span>
          <input defaultValue="Box 6" className="h-full min-w-0 flex-1 border border-[#e6e6e6] border-b-[#777] bg-white px-0.5 outline-none" />
        </label>
      </div>
      <div className="flex w-[98px] flex-col">
        <Push hot cursor="left-[79px]">Ok</Push>
        <div className="mt-2 flex"><Push>Cancel</Push></div>
        <label className="mt-[35px] text-[#a0a0a0]">
          <span className="pl-0.5">Multiple:</span>
          <span className="mt-1 flex h-6 border border-[#e6e6e6]">
            <input defaultValue="1" disabled className="min-w-0 flex-1 bg-[#f0f0f0] pl-1 text-[#808080]" />
            <span className="flex w-5 flex-col items-center justify-around border-b border-r border-[#b4b4b4] bg-[#f6f6f6]">
              <Svg className="h-1.5 w-2" box="0 0 8 6"><path d="M0 6h8L4 0z" fill="#999" /></Svg>
              <Svg className="h-1.5 w-2" box="0 0 8 6"><path d="M0 0h8L4 6z" fill="#999" /></Svg>
            </span>
          </span>
        </label>
      </div>
    </div>
  </Dialog>
);

const words = ["1 Word Output", "1 Word In- and Output", "2 Word Input", "2 Word Output", "2 Word In- and Output", "4 Word Input", "4 Word Output", "4 Word In- and Output", "8 Word Input", "8 Word Output", "8 Word In- and Output", "10 Word Input", "10 Word Output", "10 Word In- and Output"];

const Chip = () => (
  <Svg className="h-3 w-[18px]" box="0 0 18 12">
    <path d="M0 2l11-2 1 3 5 5-2 2-4 2-6-1-3-5-1-1z" fill="#555a62" />
    <path d="M4 3l6-1 3 5" stroke="#7c828c" strokeWidth="1.200" />
  </Svg>
);

const slots: [number, string][] = Array.from({ length: 28 }, (_, i) => [i, i === 0 ? "Term 1 (DAP Module)" : i === 1 ? "Term 2 (4 Word In- and Output)" : ""]);

const DeviceConfiguration = () => (
  <Dialog title="Device Configuration" icon={<Bus c="#138a86" foot />} closable className="left-[2017px] top-[244px] h-[715px] w-[1196px]">
    <div className="grid flex-1 grid-cols-3 gap-5 pb-5 pl-[23px] pr-[26px] pt-[21px]">
      <div className="relative border border-[#828282] pr-[22px] pt-px">
        <table className="w-full table-fixed border-collapse">
          <colgroup>
            <col className="w-6" />
            <col className="w-[47px]" />
            <col />
          </colgroup>
          <thead>
            <tr className="h-[25px] bg-white text-left">
              <th colSpan={2} className="border-r border-[#e6e6e6] pl-1.5 font-normal">Slot</th>
              <th className="pl-1.5 font-normal">Module</th>
            </tr>
          </thead>
          <tbody>
            {slots.map(([n, name]) => (
              <tr key={n} className="h-[21px]">
                <td className="pl-0.5">{n < 2 ? <Quad /> : <Chip />}</td>
                <td className="pr-1 text-center">{n}</td>
                <td className={"border-b border-[#ebebeb] pl-1.5 " + (n ? "bg-white" : "bg-[#f4f4f4]")}>{name}</td>
              </tr>
            ))}
          </tbody>
        </table>
        <div className="absolute right-3 top-[22px] h-[60px] w-0.5 rounded bg-[#8a8a8a]" />
        <div className="absolute bottom-2.5 left-[22px] right-[46px] h-[3px] rounded bg-[#8a8a8a]" />
        <div className="absolute -left-[5px] right-[19px] top-[38px] h-7 rounded-md border-4 border-[#8fce3c] shadow-[1px_2px_5px_#0006]" />
      </div>
      <div className="border border-[#828282] pr-0.5 pt-px">
        <table className="w-full table-fixed border-collapse">
          <colgroup>
            <col className="w-6" />
            <col className="w-[47px]" />
            <col />
          </colgroup>
          <thead>
            <tr className="h-[25px] bg-white text-left">
              <th colSpan={2} className="border-r border-[#e6e6e6] pl-1.5 font-normal">SubSlot</th>
              <th className="pl-1.5 font-normal">SubModule</th>
            </tr>
          </thead>
          <tbody>
            <tr className="h-5">
              <td className="pl-1">
                <Svg className="h-3.5 w-3.5" box="0 0 14 14">
                  <path d="M0 0h12v14h-3v-2H0z" fill="#e8281d" />
                  <path d="M2 3h3v3H2zM7 3h3v3H7z" fill="#f4e08a" />
                  <path d="M2 8h3v2H2z" fill="#48b0d8" />
                </Svg>
              </td>
              <td className="pr-1 text-center">1</td>
              <td className="bg-white pl-1.5">Subterm 5 (4 Word In- and Output)</td>
            </tr>
          </tbody>
        </table>
      </div>
      <div className="flex flex-col">
        <div className="relative flex h-[286px] border border-[#828282] bg-white">
          <div className="ml-3.5 w-[23px] border-l border-dotted border-[#777]" />
          <ul className="flex-1 border-l border-dotted border-[#777] pt-px">
            {words.map((w, i) => (
              <li key={w} className="flex h-5 items-center whitespace-nowrap">
                <Dots w="w-3.5" />
                <Quad />
                <span className={i === 7 ? "ml-1.5 bg-[#e8e8e8] px-px" : "ml-1.5 px-px"}>{w}</span>
              </li>
            ))}
          </ul>
          <div className="w-5 bg-[#f0f0f0]" />
          <div className="absolute right-2.5 top-[45px] h-[105px] w-[3px] rounded bg-[#8a8a8a]" />
          <div className="absolute left-7 top-[138px] h-[26px] w-[198px] rounded-md border-4 border-[#e8141c] shadow-[1px_2px_5px_#0006]" />
        </div>
        <div className="mt-2.5 h-[248px] border border-[#828282] bg-white" />
        <div className="mt-3.5 flex-1 border border-white border-b-[#777] px-0.5 pt-0.5 leading-4">
          ModuleInfo '4 Word In- and Output':
          <br />4 Word In- and Output
        </div>
      </div>
    </div>
    <div className="absolute bottom-1 right-1"><SizeGrip /></div>
  </Dialog>
);

/* ------------------------------------------------------------------ */
/* Context menus                                                        */
/* ------------------------------------------------------------------ */

type Entry = { label: string; keys?: string; icon?: React.ReactNode; dim?: boolean; hot?: boolean; sub?: boolean };

const groups: Entry[][] = [
  [
    { label: "Add New Item...", keys: "Ins", icon: <NewItem bg="#c6dcf4" />, hot: true },
    { label: "Add Existing Item...", keys: "Shift+Alt+A", icon: <AddItem bg="#f6f6f6" /> },
    { label: "Remove", keys: "Del", icon: <Cross c="#e0444e" className="h-4 w-4" /> },
    {
      label: "Rename",
      keys: "F2",
      icon: (
        <Svg>
          <path d="M11 6H1v8h10M4 10h5" stroke="#4a4a4a" strokeWidth="1.600" />
          <path d="M11 1h6M14 1v17M11 18h6M16 6h3v8h-3" stroke="#4a4a4a" strokeWidth="1.500" />
        </Svg>
      ),
    },
  ],
  [{ label: "Change NetId..." }],
  [{ label: "Save Device 3 (EL6631-0010) As..." }],
  [{ label: "Online Reset" }, { label: "Online Reload" }, { label: "Online Delete" }],
  [{ label: "Change Id..." }],
  [{ label: "Go To Linked Terminal" }],
  [
    { label: "Copy", keys: "Ctrl+C", icon: <Copy /> },
    { label: "Cut", keys: "Ctrl+X", icon: <Scissors c="#4a4a4a" /> },
    { label: "Paste", keys: "Ctrl+V", icon: <Paste />, dim: true },
    { label: "Paste with Links", dim: true },
  ],
  [{ label: "XML", sub: true }],
  [
    {
      label: "Independent Project File",
      icon: (
        <Svg className="h-[18px] w-[18px]" box="0 0 18 18">
          <path d="M0 0h18v18H0z" fill="#4c57c4" />
          <path d="M4 0h10v8H4z" fill="#e8eaf8" />
          <path d="M5 11h8v7H5z" fill="#c9cdea" />
          <path d="M6 12h3v5H6z" fill="#333a8c" />
        </Svg>
      ),
    },
  ],
  [
    {
      label: "Simulation Mode",
      icon: (
        <Svg>
          <circle cx="6" cy="5" r="4.500" fill="#35b4ea" />
          <path d="M8 3c-3-1.500-5 1-2 2s1 3-2 2" stroke="#fff" strokeWidth="1.200" />
        </Svg>
      ),
    },
    {
      label: "Disable",
      icon: (
        <Svg>
          <circle cx="14" cy="14" r="4.500" fill="#e3261f" />
          <path d="M11.500 14h5" stroke="#fff" strokeWidth="1.800" />
        </Svg>
      ),
    },
  ],
];

const DeviceMenu = () => (
  <div role="menu" className="absolute left-[312px] top-[548px] w-[418px] border border-[#cccedb] bg-[#f6f6f6] px-[3px] pb-1 pt-1 shadow-[4px_4px_4px_#0007]">
    {groups.map((g, i) => (
      <div key={i} role="group">
        {i > 0 && <div className="my-[3px] ml-9 h-px bg-[#dcdce0]" />}
        {g.map((e) => (
          <button
            key={e.label}
            type="button"
            role="menuitem"
            disabled={e.dim}
            className={"relative flex h-[27px] w-full items-center border text-left " + (e.hot ? "border-[#2f6fbe] bg-[#c6dcf4] " : "border-transparent ") + (e.dim ? "text-[#a2a4a5]" : "")}
          >
            <span className="flex w-7 justify-center">{e.icon}</span>
            <span className="ml-[11px] w-[267px]">{e.label}</span>
            {e.keys}
            {e.sub && (
              <Svg className="absolute right-3 h-2.5 w-1.5" box="0 0 6 10"><path d="M0 0l6 5-6 5z" fill="#666" /></Svg>
            )}
            {e.hot && <Cursor className="absolute left-[230px] top-3" />}
          </button>
        ))}
      </div>
    ))}
  </div>
);

const ApiMenu = () => (
  <div role="menu" className="absolute left-[1893px] top-[1014px] w-[242px] border border-[#cccedb] bg-[#f6f6f6] p-1 shadow-[4px_4px_4px_#0007]">
    <button type="button" role="menuitem" className="flex h-[27px] w-full items-center text-left">
      <span className="flex w-7 justify-center"><NewItem bg="#f6f6f6" /></span>
      <span className="ml-2.5 w-[153px]">Add New Item...</span>
      Ins
    </button>
    <Cursor className="absolute -left-1 -top-1" />
  </div>
);

/* ------------------------------------------------------------------ */
/* Callout arrows                                                       */
/* ------------------------------------------------------------------ */

const arrows: [number, number, number, number][] = [
  [486, 341, 173, 1054],
  [687, 566, 843, 628],
  [1416, 597, 886, 382],
  [2054, 1039, 2036, 892],
];

const taper = ([x1, y1, x2, y2]: [number, number, number, number]) => {
  const len = Math.hypot(x2 - x1, y2 - y1);
  const dx = (x2 - x1) / len;
  const dy = (y2 - y1) / len;
  const at = (back: number, side: number) => `${x2 - dx * back - dy * side},${y2 - dy * back + dx * side}`;
  return [at(0, 0), at(26, 12), at(22, 6), at(len, 1), at(len, -1), at(22, -6), at(26, -12)].join(" ");
};

const Arrows = () => (
  <svg className="pointer-events-none absolute left-0 top-0 h-[1150px] w-[3222px] drop-shadow-[2px_3px_2px_#0006]" viewBox="0 0 3222 1150" aria-hidden="true">
    {arrows.map((a, i) => (
      <polygon key={i} points={taper(a)} fill="#ff0000" />
    ))}
  </svg>
);

export default function App() {
  return (
    <div className="relative min-h-screen overflow-hidden bg-white font-['Open_Sans',sans-serif] text-sm text-[#1e1e1e]">
      <div className="grid grid-cols-[minmax(0,1321fr)_minmax(0,207fr)_minmax(0,1219fr)_minmax(0,475fr)] items-start">
        <LeftWindow />
        <div />
        <RightWindow />
      </div>
      <InsertDevice />
      <DeviceMenu />
      <InsertBox />
      <DeviceConfiguration />
      <ApiMenu />
      <div className="absolute left-[1675px] top-[1052px] h-[29px] w-[285px] rounded-md border-4 border-[#8fce3c] shadow-[1px_2px_5px_#0006]" />
      <Arrows />
    </div>
  );
}
